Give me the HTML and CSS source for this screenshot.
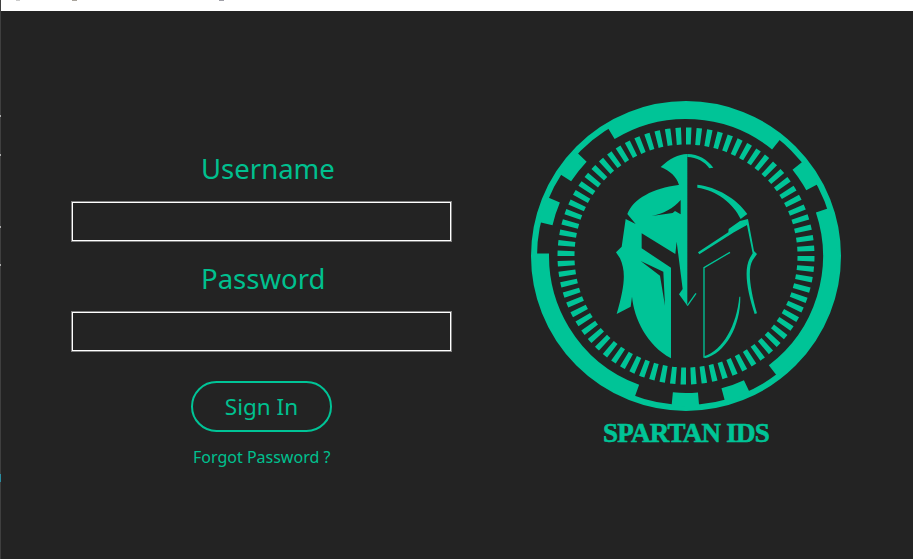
FILE: index.html
```html
<!DOCTYPE html>
<html lang="en">

<head>
    <meta charset="UTF-8">
    <meta name="viewport" content="width=device-width, initial-scale=1.0">
    <title>Spartan IDS</title>
    <link rel="stylesheet" href="styles.css">
</head>

<body>
    <div class="topbar"></div>

    <div id="main">
        <form class="login">
            <label class="field-label" for="username">Username</label>
            <input class="field" id="username" type="text">

            <label class="field-label" for="password">Password</label>
            <input class="field" id="password" type="password">

            <button class="signin" type="button">Sign In</button>
            <a class="forgot" href="#">Forgot Password ?</a>
        </form>

        <div class="brand">
            <svg class="logo" viewBox="0 0 320 320" aria-hidden="true">
                <!-- outer ring -->
                <circle class="ring" cx="160" cy="160" r="152"></circle>
                <circle class="ring-blocks" cx="160" cy="160" r="144" pathLength="360" transform="rotate(238.6 160 160)"></circle>
                <!-- tick ring -->
                <circle class="ticks" cx="160" cy="160" r="120" pathLength="76" transform="rotate(-90 160 160)"></circle>
                <!-- helmet, drawn 3x -->
                <g transform="translate(84 49) scale(0.3333)">
                    <path class="helmet-fill" fill-rule="evenodd" d="M152,66 C178,42 205,27 232,27 L232,482 L207,448 L218,432 L200,290 L196,327 L95,265 L95,310 L183,368 L183,640 C110,600 72,520 66,455 L62,485 L20,507 C45,420 48,380 30,340 L18,322 L35,305 L47,222 L77,237 L52,207 C70,160 130,130 205,120 L207,120 C200,95 180,78 152,66 Z M125,213 C160,207 190,190 212,165 L212,208 L195,198 L188,204 Z M92,348 L160,380 L165,482 L150,392 Z"></path>
                    <path class="helmet-fill" d="M232,27 C265,27 292,44 310,68 L298,70 C285,50 260,37 232,36 Z"></path>
                    <path class="helmet-fill" d="M262,119 C320,126 380,160 412,207 L392,222 C370,175 320,136 262,128 Z"></path>
                    <path class="helmet-fill" d="M414,222 L432,318 L441,327 L428,346 C412,375 420,430 441,505 L434,507 C412,440 400,375 420,338 L428,325 L411,240 L372,262 L268,328 L264,322 L355,262 L356,252 L390,228 Z"></path>
                    <path class="helmet-line" stroke-width="4" d="M360,322 L282,368 L282,638"></path>
                    <path class="helmet-fill" d="M282,634 C340,615 380,540 388,455 L391,455 C392,545 345,625 284,640 Z"></path>
                    <path class="helmet-line" stroke-width="4" d="M258,445 L232,482"></path>
                </g>
            </svg>
            <div class="brand-name">SPARTAN IDS</div>
        </div>
    </div>
</body>

</html>
```

FILE: styles.css
```css
html,
body {
    height: 100%;
}

body {
    margin: 0;
    padding-left: 1px;
    box-sizing: border-box;
    display: flex;
    flex-direction: column;
    overflow: hidden;
    background-color: #232323;
    /* thin strip on the left edge with its small marks */
    background-image:
        linear-gradient(#aaa, #aaa),
        linear-gradient(#aaa, #aaa),
        linear-gradient(#aaa, #aaa),
        linear-gradient(#aaa, #aaa),
        linear-gradient(#2a8ca0, #2a8ca0),
        linear-gradient(#3f3f3f, #3f3f3f);
    background-size: 1px 2px, 1px 2px, 1px 2px, 1px 2px, 1px 8px, 1px 100%;
    background-position: 0 115px, 0 154px, 0 226px, 0 264px, 0 474px, 0 0;
    background-repeat: no-repeat;
    font-family: "Noto Sans", sans-serif;
    color: #00c08f;
}

.topbar {
    height: 11px;
    background-color: #fff;
    /* bits of a cut off title line */
    background-image:
        linear-gradient(#ccc, #ccc),
        linear-gradient(#a9a49c, #a9a49c),
        linear-gradient(#a0a0a8, #a0a0a8);
    background-size: 4px 1px, 5px 1px, 5px 1px;
    background-position: 15px 0, 71px 0, 218px 0;
    background-repeat: no-repeat;
}

#main {
    flex: 1;
    display: flex;
    align-items: flex-start;
}

.login {
    width: 380px;
    margin-left: 71px;
    padding-top: 139px;
    display: flex;
    flex-direction: column;
}

.field-label {
    margin-left: 129px;
    font-size: 27.5px;
    line-height: 38px;
    margin-bottom: 14px;
}

.field {
    box-sizing: border-box;
    width: 379px;
    height: 39px;
    margin-bottom: 19px;
    padding: 0 8px;
    background-color: #232323;
    border: 1px solid #fff;
    outline: 1px solid #808080;
}

.signin {
    align-self: flex-start;
    box-sizing: border-box;
    width: 141px;
    height: 51px;
    margin-top: 11px;
    margin-left: 119px;
    background: none;
    border: 2px solid #00c497;
    border-radius: 26px;
    color: #00c08f;
    font-family: inherit;
    font-size: 22.5px;
}

.forgot {
    margin-top: 14px;
    margin-left: 121px;
    font-size: 16px;
    line-height: 22px;
    color: #00c08f;
    text-decoration: none;
}

.brand {
    margin-left: 74px;
    padding-top: 85px;
    display: flex;
    flex-direction: column;
    align-items: center;
}

.logo {
    display: block;
    width: 320px;
    height: 320px;
}

.ring {
    fill: none;
    stroke: #00c497;
    stroke-width: 6;
}

.ring-blocks {
    fill: none;
    stroke: #00c497;
    stroke-width: 14;
    stroke-dasharray: 70.3 12.1 10.4 10.1 71.3 12.2 10 10 10.5 14.5 71 12 10 10 10.5 15.1;
}

.ticks {
    fill: none;
    stroke: #00c497;
    stroke-width: 17;
    stroke-dasharray: 0.52 0.48;
}

.helmet-fill {
    fill: #00c497;
}

.helmet-line {
    fill: none;
    stroke: #00c497;
}

.brand-name {
    margin-top: 2px;
    font-family: "Liberation Serif", serif;
    font-weight: bold;
    font-size: 27px;
    line-height: 30px;
    letter-spacing: -0.75px;
    -webkit-text-stroke: 0.6px #00c497;
    color: #00c497;
}
```
